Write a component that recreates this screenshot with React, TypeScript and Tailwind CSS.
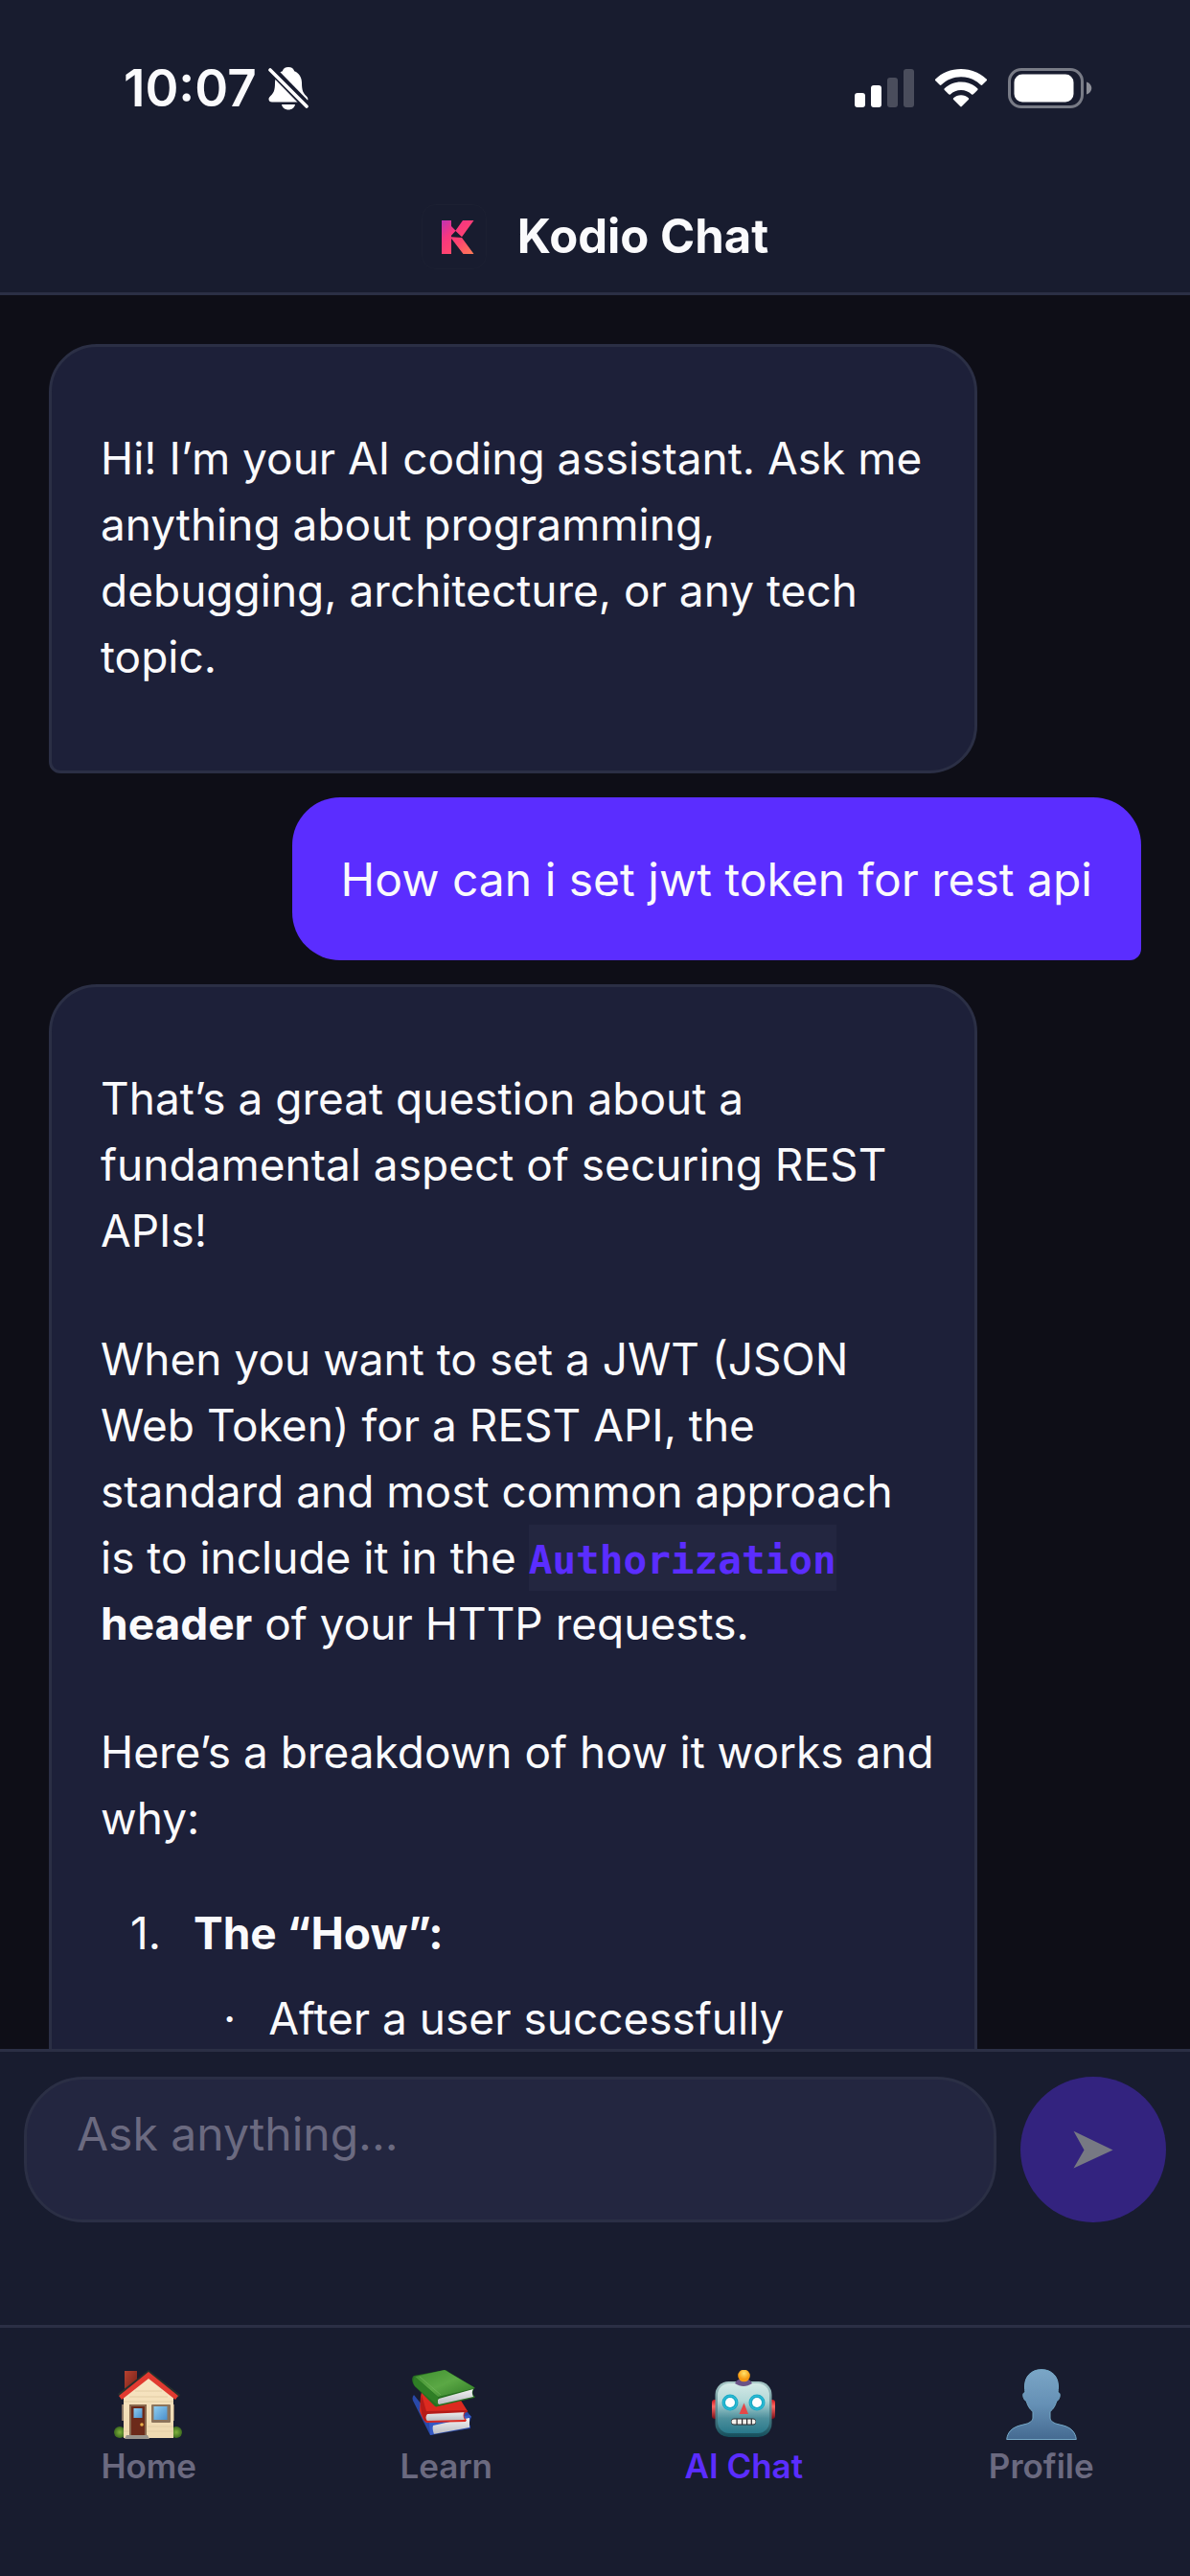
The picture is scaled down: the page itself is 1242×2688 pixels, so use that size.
import type { ReactNode } from "react";

function BellOffIcon() {
  return (
    <svg viewBox="0 0 42 46" className="h-[46px] w-[42px]" aria-label="Silent mode">
      <path
        fill="#fff"
        d="M21 1c3.200 0 5.500 1.600 6.200 4.200 5 2 7.800 6.500 7.800 12.300 0 8 1.500 10.500 4.500 13.500 1.300 1.400 1.900 2.300 1.900 3.500 0 2-1.400 3-3.500 3H4c-2.200 0-3.500-1-3.500-3 0-1.300.6-2.200 1.900-3.500C5.500 28 7 25.500 7 17.500c0-5.800 2.800-10.300 7.800-12.300C15.500 2.600 17.800 1 21 1Z"
      />
      <path fill="#fff" d="M14 40h14c-.6 3.300-3.400 5.500-7 5.500s-6.400-2.200-7-5.500Z" />
      <path d="M-1-1 44 45" stroke="#181c2f" strokeWidth="9" />
      <path d="M2 4 40 42" stroke="#fff" strokeWidth="3.600" strokeLinecap="round" />
    </svg>
  );
}

function SignalIcon() {
  return (
    <svg viewBox="0 0 62 40" className="h-[40px] w-[62px]" aria-label="Signal">
      <g fill="#fff">
        <rect x="0" y="25" width="11" height="15" rx="3" />
        <rect x="17" y="17" width="11" height="23" rx="3" />
        <rect x="34" y="9" width="11" height="31" rx="3" opacity=".22" />
        <rect x="51" y="0" width="11" height="40" rx="3" opacity=".22" />
      </g>
    </svg>
  );
}

function WifiIcon() {
  return (
    <svg viewBox="0 0 54 40" className="h-[40px] w-[54px]" aria-label="Wi-Fi" fill="#fff">
      <path d="M27 0C16.500 0 7 4 .4 10.500c-.6.600-.6 1.200 0 1.800l4.300 4.300c.6.600 1.200.6 1.800 0C12 11.300 19 8.300 27 8.300s15 3 20.500 8.300c.6.600 1.200.6 1.800 0l4.300-4.300c.6-.6.6-1.200 0-1.800C47 4 37.500 0 27 0Z" />
      <path d="M27 13.500c-6.700 0-12.700 2.500-17.200 6.700-.6.600-.6 1.200 0 1.800l4.300 4.300c.6.600 1.200.6 1.800.1 3-2.700 6.800-4.400 11.100-4.400s8.100 1.700 11.100 4.400c.6.500 1.200.5 1.800-.1l4.300-4.300c.6-.6.6-1.200 0-1.800-4.500-4.200-10.500-6.700-17.200-6.700Z" />
      <path d="M27 27.300c-3 0-5.700 1.100-7.800 2.900-.6.500-.6 1.100 0 1.700l7 7.200c.6.600 1 .6 1.600 0l7-7.200c.6-.6.6-1.200 0-1.700-2.100-1.800-4.800-2.900-7.800-2.900Z" />
    </svg>
  );
}

function BatteryIcon() {
  return (
    <svg viewBox="0 0 88 42" className="h-[42px] w-[88px]" aria-label="Battery">
      <rect x="1.500" y="1.500" width="76" height="39" rx="12.500" fill="none" stroke="#fff" strokeOpacity=".42" strokeWidth="3" />
      <rect x="6.500" y="6.500" width="62" height="29" rx="8.500" fill="#fff" />
      <path d="M82 14.500c3.200 1.200 5.300 3.600 5.300 6.500S85.200 26.300 82 27.500Z" fill="#fff" fillOpacity=".5" />
    </svg>
  );
}

function KodioLogo() {
  return (
    <svg viewBox="0 0 68 68" className="size-[68px]" aria-label="Kodio">
      <defs>
        <linearGradient id="k-fill" x1="20" y1="16" x2="54" y2="53" gradientUnits="userSpaceOnUse">
          <stop offset="0" stopColor="#b833b8" />
          <stop offset=".35" stopColor="#f7377f" />
          <stop offset=".6" stopColor="#ff4470" />
          <stop offset="1" stopColor="#ff7f55" />
        </linearGradient>
      </defs>
      <rect x=".5" y=".5" width="67" height="67" rx="14" fill="#181c2f" stroke="#1c2032" />
      <path
        fill="url(#k-fill)"
        d="M21 17h10v6l4.500 4.500L43 17h11.500L42 34.300l-6.500-6.300-4.500 4.800v1.500l11 .7L54.500 52H43.500L32 37l-1-1v16H21Z"
      />
    </svg>
  );
}

function HomeEmoji() {
  return (
    <svg viewBox="0 0 72 72" className="size-[72px]" aria-hidden="true">
      <defs>
        <linearGradient id="h-wall" x1="0" y1="0" x2="0" y2="1">
          <stop offset="0" stopColor="#f8e6c4" />
          <stop offset="1" stopColor="#eed9b0" />
        </linearGradient>
        <linearGradient id="h-chim" x1="0" y1="0" x2="1" y2="1">
          <stop offset="0" stopColor="#b8412f" />
          <stop offset="1" stopColor="#6f2019" />
        </linearGradient>
        <linearGradient id="h-glass" x1="0" y1="0" x2="1" y2="1">
          <stop offset="0" stopColor="#8fcdf0" />
          <stop offset="1" stopColor="#4a8fcc" />
        </linearGradient>
        <radialGradient id="h-bush">
          <stop offset="0" stopColor="#7fb13c" />
          <stop offset="1" stopColor="#3c6a1f" />
        </radialGradient>
      </defs>
      <circle cx="6" cy="65" r="6" fill="url(#h-bush)" />
      <circle cx="65" cy="65" r="6" fill="url(#h-bush)" />
      <path d="M8 36h2v17H8ZM61 36h2v17h-2Z" fill="#8a7766" />
      <rect x="11" y="1" width="13" height="22" fill="url(#h-chim)" />
      <path d="M10 28 36 6l26 22v43H10Z" fill="url(#h-wall)" />
      <path d="M22 22h28M16 28h40M10 33h52M10 64h52M35 59h27" stroke="#e2cda5" strokeWidth="1" />
      <path d="M4 25 36 0l33 26-2 3L36 4 7 28Z" fill="#26302c" />
      <path d="M5 27 36 2l31 25-3 4L36 9 8 31Z" fill="#e13a30" />
      <rect x="16" y="36" width="18" height="32" fill="#8a6a50" />
      <rect x="18" y="38" width="14" height="30" fill="#6c2a1a" />
      <rect x="20.500" y="40" width="9" height="10" fill="url(#h-glass)" />
      <circle cx="29" cy="57" r="1.800" fill="#e9b04a" />
      <rect x="39" y="36" width="20" height="19" rx="1" fill="#8c745c" />
      <rect x="41.500" y="38" width="14" height="14" fill="url(#h-glass)" />
      <path d="M13 68h22l2 4H11Z" fill="#99948c" />
    </svg>
  );
}

function BooksEmoji() {
  return (
    <svg viewBox="0 0 72 72" className="size-[72px]" aria-hidden="true">
      <defs>
        <linearGradient id="b-green" x1="0" y1="0" x2="1" y2="1">
          <stop offset="0" stopColor="#3f8f30" />
          <stop offset=".5" stopColor="#5ba845" />
          <stop offset="1" stopColor="#2f7a25" />
        </linearGradient>
        <linearGradient id="b-page" x1="0" y1="0" x2="0" y2="1">
          <stop offset="0" stopColor="#f4f4f4" />
          <stop offset="1" stopColor="#b9bcc2" />
        </linearGradient>
      </defs>
      <path d="M2 26c-2 2-2 5 0 8l17 34 42-7v-3l-2-1 3-8-4-5-40 2Z" fill="#2949a8" />
      <path d="M21 57 60 50v10l-38 7c-3-2-4-7-1-10Z" fill="url(#b-page)" />
      <path d="M18 55 60 47l2 2-40 9c-1 3 0 6 1 9l-4 1Z" fill="#3459c4" />
      <path d="m10 23 38 4 10 16-1 1-2 1c-1 3-1 5 2 7l-1 2-41 1c-3-2-5-7-7-12L9 28Z" fill="#dc2a20" />
      <path d="M15 45 55 43c-2 3-2 6 0 9l-39 1c-3-2-3-6-1-8Z" fill="url(#b-page)" />
      <path d="m10 26 5 17 42-1 1 2-42 2c-2 2-2 5 0 8l-3-1C9 46 8 34 10 26Z" fill="#b51b18" />
      <path d="M2 6 34 0c2 0 3 1 4 2l27 16-1 3c-1 3-1 5 2 7l-1 1-38 9c-2 1-3 0-4-1L3 17C0 14-1 8 2 6Z" fill="#276f20" />
      <path d="M28 30 64 20c-2 3-1 5 0 8l-36 8c-2-2-2-4 0-6Z" fill="url(#b-page)" />
      <path d="M3 7 34 0 66 19 27 28Z" fill="url(#b-green)" />
      <path d="m3 7 24 21v9L3 17C1 13 1 9 3 7Z" fill="#2f7e26" />
      <path d="m8 7 22 19" stroke="#77b961" strokeWidth="1" opacity=".6" />
    </svg>
  );
}

function RobotEmoji() {
  return (
    <svg viewBox="0 0 72 72" className="size-[72px]" aria-hidden="true">
      <defs>
        <linearGradient id="r-head" x1="0" y1="0" x2="0" y2="1">
          <stop offset="0" stopColor="#d4e9e7" />
          <stop offset=".35" stopColor="#b4d9d8" />
          <stop offset=".7" stopColor="#4d8f9c" />
          <stop offset="1" stopColor="#28788a" />
        </linearGradient>
        <linearGradient id="r-rim" x1="0" y1="0" x2="0" y2="1">
          <stop offset="0" stopColor="#a9c9c8" />
          <stop offset="1" stopColor="#144e5c" />
        </linearGradient>
        <linearGradient id="r-ear" x1="0" y1="0" x2="0" y2="1">
          <stop offset="0" stopColor="#d3141b" />
          <stop offset=".35" stopColor="#ff6a64" />
          <stop offset="1" stopColor="#7b0c16" />
        </linearGradient>
        <radialGradient id="r-bulb" cx=".5" cy=".3">
          <stop offset="0" stopColor="#ffe36a" />
          <stop offset="1" stopColor="#f79a12" />
        </radialGradient>
      </defs>
      <rect x="3" y="31" width="10" height="20" rx="3" fill="url(#r-ear)" />
      <rect x="59" y="31" width="10" height="20" rx="3" fill="url(#r-ear)" />
      <rect x="6.500" y="12" width="59" height="58" rx="14" fill="url(#r-rim)" />
      <rect x="9" y="14" width="54" height="52" rx="12" fill="url(#r-head)" />
      <path d="M27 14c2-4 5-5 9-5s7 1 9 5c-3 2-6 3-9 3s-6-1-9-3Z" fill="#6a5287" />
      <circle cx="36.500" cy="6" r="6.300" fill="url(#r-bulb)" />
      <circle cx="22" cy="34" r="8.500" fill="#1aa9c6" />
      <circle cx="22" cy="34" r="7" fill="none" stroke="#31c4da" strokeWidth="1" />
      <circle cx="22" cy="34" r="5" fill="#fff" />
      <circle cx="50" cy="34" r="8.500" fill="#1aa9c6" />
      <circle cx="50" cy="34" r="7" fill="none" stroke="#31c4da" strokeWidth="1" />
      <circle cx="50" cy="34" r="5" fill="#fff" />
      <path d="M36.500 34.500 41 46h-9.500Z" fill="#e64848" />
      <rect x="23" y="50.500" width="26" height="7" rx="3.500" fill="#2a2a2e" />
      <path d="M26 51.500h2.500v5H26a2.500 2.500 0 0 1 0-5ZM29.700 51.500H34v5h-4.300ZM35.200 51.500H39v5h-3.800ZM40.200 51.500h3.500v5h-3.500ZM44.900 51.500H46a2.500 2.500 0 0 1 0 5h-1.100Z" fill="#f3f1ec" />
    </svg>
  );
}

function PersonEmoji() {
  return (
    <svg viewBox="0 0 74 74" className="size-[74px]" aria-hidden="true">
      <defs>
        <linearGradient id="p-fill" x1="0" y1="0" x2="0" y2="1">
          <stop offset="0" stopColor="#7ba6c6" />
          <stop offset=".5" stopColor="#6590b5" />
          <stop offset="1" stopColor="#456a91" />
        </linearGradient>
      </defs>
      <path
        fill="url(#p-fill)"
        stroke="#76a9c8"
        strokeWidth="1"
        d="M37 .6c11 0 17.500 7.500 17.500 17.400 0 2.500-.2 4.500-.5 6.500 2.700.2 2.700 3.500 1.500 6-.7 1.700-1.500 2.500-2.700 2.800-1.300 5-3.500 8.700-6.800 11.200v6.500c0 2.500 2.500 5 7 6.300l6 1.500c8.500 2 13.500 7 14.300 14.700H.7C1.500 65.800 6.500 61 15 58.800l6-1.500c4.500-1.300 7-3.800 7-6.300v-6.500c-3.300-2.500-5.500-6.200-6.800-11.200-1.200-.3-2-1.100-2.700-2.800-1.200-2.500-1.200-5.800 1.500-6-.3-2-.5-4-.5-6.500C19.500 8.100 26 .6 37 .6Z"
      />
    </svg>
  );
}

function AssistantMessage({ children }: { children: ReactNode }) {
  return (
    <article className="w-[85%] shrink-0 self-start rounded-[50px] rounded-bl-[12px] border-[3px] border-[#2b2f45] bg-[#1d2039] pt-[82px] pr-9 pb-[84px] pl-[51px] text-[46px] leading-[69px]">
      {children}
    </article>
  );
}

function UserMessage({ children }: { children: ReactNode }) {
  return (
    <article className="max-w-[85%] shrink-0 self-end rounded-[50px] rounded-br-[12px] bg-[#5b2dff] px-[51px] pt-[51px] pb-[49px] text-[48px] leading-[70px]">
      {children}
    </article>
  );
}

const tabs = [
  { label: "Home", icon: <HomeEmoji />, active: false },
  { label: "Learn", icon: <BooksEmoji />, active: false },
  { label: "AI Chat", icon: <RobotEmoji />, active: true },
  { label: "Profile", icon: <PersonEmoji />, active: false },
];

export default function App() {
  return (
    <div className="flex h-screen flex-col bg-[#0e0e17] font-['Inter',sans-serif] text-[#fafafc]">
      <header className="shrink-0 border-b-[3px] border-[#2b2f45] bg-[#181c2f]">
        <div className="flex h-[184px] items-center justify-between pr-[102px] pl-[129px]">
          <div className="flex items-center gap-3">
            <time className="pt-0.5 text-[53px] font-semibold">10:07</time>
            <BellOffIcon />
          </div>
          <div className="flex items-center gap-[22px]">
            <SignalIcon />
            <WifiIcon />
            <BatteryIcon />
          </div>
        </div>
        <div className="flex h-[121px] items-center justify-center gap-8 pt-1">
          <KodioLogo />
          <h1 className="text-[49px] font-bold">Kodio Chat</h1>
        </div>
      </header>

      <main className="flex min-h-0 flex-1 flex-col gap-[25px] overflow-hidden px-[51px] pt-[51px]">
        <AssistantMessage>
          <p>
            Hi! I’m your AI coding assistant. Ask me anything about programming, debugging,
            architecture, or any tech topic.
          </p>
        </AssistantMessage>
        <UserMessage>
          <p>How can i set jwt token for rest api</p>
        </UserMessage>
        <AssistantMessage>
          <p>That’s a great question about a fundamental aspect of securing REST APIs!</p>
          <p className="mt-[65px]">
            When you want to set a JWT (JSON Web Token) for a REST API, the standard and most
            common approach is&nbsp;to include it in the{" "}
            <code className="bg-[#232640] pt-[13px] pb-2 font-['DejaVu_Sans_Mono',monospace] text-[41px] leading-[48px] font-bold text-[#5b2dff]">
              Authorization
            </code>{" "}
            <strong className="font-bold">header</strong> of your HTTP requests.
          </p>
          <p className="mt-[65px]">Here’s a breakdown of how it works and why:</p>
          <ol className="mt-[51px]">
            <li className="flex gap-[34px] pl-[31px]">
              <span>1.</span>
              <div>
                <strong className="font-bold">The “How”:</strong>
                <ul className="mt-5">
                  <li className="flex gap-[34px] pl-[31px]">
                    <span>·</span>
                    <span>After a user successfully</span>
                  </li>
                </ul>
              </div>
            </li>
          </ol>
        </AssistantMessage>
      </main>

      <form
        className="flex h-[288px] shrink-0 items-start gap-[25px] border-t-[3px] border-[#2b2f45] bg-[#181c2f] px-[25px] pt-[26px]"
        onSubmit={(event) => event.preventDefault()}
      >
        <textarea
          aria-label="Message"
          placeholder="Ask anything..."
          className="h-[152px] min-w-0 flex-1 resize-none rounded-[62px] border-[3px] border-[#2b2f45] bg-[#232640] px-[52px] pt-[27px] text-[48px] leading-[60px] outline-none placeholder:text-[#6b6a80]"
        />
        <button
          type="submit"
          aria-label="Send"
          className="flex size-[152px] shrink-0 items-center justify-center rounded-full bg-[#33237f]"
        >
          <svg viewBox="0 0 42 40" className="h-[40px] w-[42px]" aria-hidden="true">
            <path d="M.5.800 41.500 20.500.500 39.500 11.500 20.500Z" fill="#777983" />
          </svg>
        </button>
      </form>

      <nav className="grid h-[262px] shrink-0 grid-cols-4 border-t-[3px] border-[#2b2f45] bg-[#181c2f]">
        {tabs.map((tab) => (
          <a
            key={tab.label}
            href="#"
            aria-current={tab.active ? "page" : undefined}
            className={
              tab.active
                ? "flex flex-col items-center pt-[42px] text-[#5b2dff]"
                : "flex flex-col items-center pt-[42px] text-[#6b6a80]"
            }
          >
            <span className="flex h-[76px] items-center">{tab.icon}</span>
            <span className="mt-[6px] text-[35px] leading-[40px] font-semibold">{tab.label}</span>
          </a>
        ))}
      </nav>
    </div>
  );
}
